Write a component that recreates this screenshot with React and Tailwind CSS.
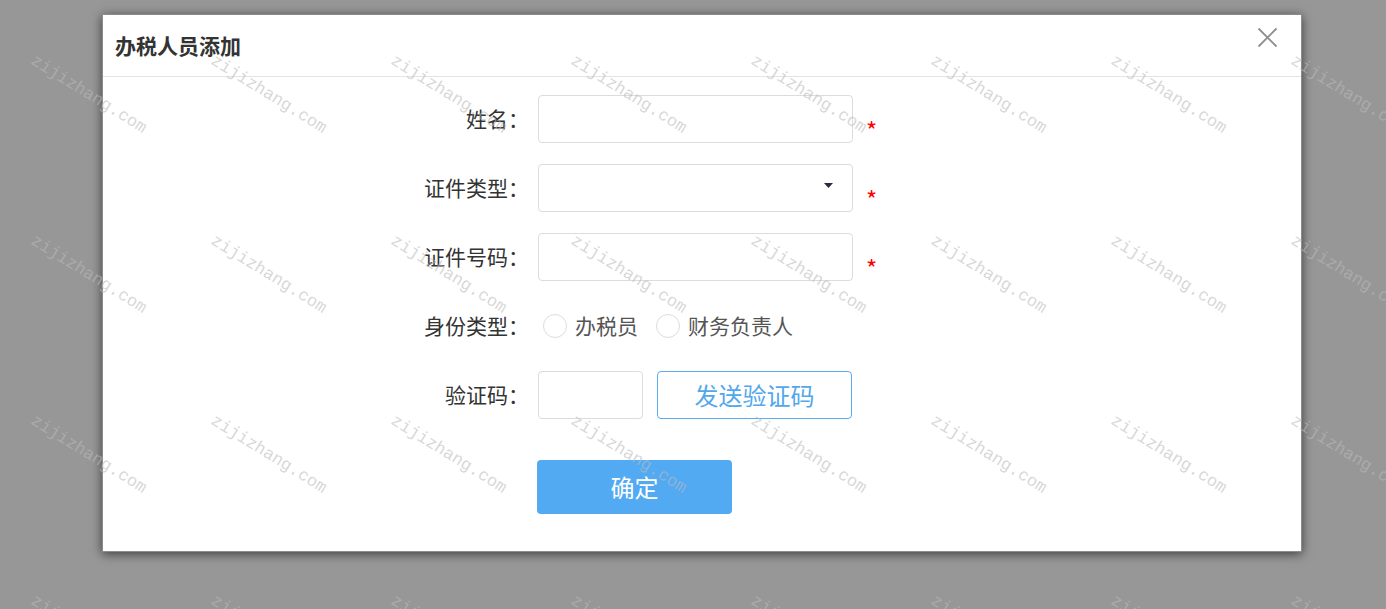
import { useState } from 'react';

const CJK = { fontFamily: '"Noto Sans CJK SC", "Noto Sans", sans-serif' };

const COLS = [0, 1, 2, 3, 4, 5, 6, 7];
const ROWS = [0, 1, 2, 3];

function Watermark() {
  return (
    <div className="pointer-events-none absolute inset-0 overflow-hidden">
      <div className="grid grid-cols-[repeat(8,180px)] auto-rows-[180px] pl-[37px] pt-[46px]">
        {ROWS.flatMap((r) =>
          COLS.map((c) => (
            <div key={`${r}-${c}`}>
              <span className="inline-block origin-top-left rotate-[32deg] whitespace-nowrap font-['Liberation_Mono',monospace] text-[17px] leading-none text-[rgba(186,186,186,0.58)]">
                zijizhang.com
              </span>
            </div>
          ))
        )}
      </div>
    </div>
  );
}

function Row({ label, children, required }) {
  return (
    <div className="flex items-center h-[48px]">
      <div className="w-[120px] text-right text-[21px] text-[#333] pr-[9px] whitespace-nowrap">{label}</div>
      {children}
      {required && <span className="ml-[13px] mt-[22px] text-[24px] leading-none text-[#f00]">*</span>}
    </div>
  );
}

function Radio({ label, checked, onClick }) {
  return (
    <button type="button" onClick={onClick} className="flex items-center gap-[8px]">
      <span className="flex w-[24px] h-[24px] items-center justify-center rounded-full border border-[#dcdcdc] bg-white">
        {checked && <span className="w-[12px] h-[12px] rounded-full bg-[#52aaf2]" />}
      </span>
      <span className="text-[21px] text-[#555]">{label}</span>
    </button>
  );
}

export default function App() {
  const [role, setRole] = useState(null);

  return (
    <div className="relative min-h-[609px] bg-[#979797] pl-[102px] pt-[14px]" style={CJK}>
      <div className="w-[1200px] h-[538px] bg-white border border-[#8c8c8c] shadow-[0_2px_10px_rgba(0,0,0,0.6)]">
        <div className="flex items-center justify-between h-[62px] border-b border-[#e3e3e3] pl-[12px] pr-[23px]">
          <h2 className="text-[21px] font-bold text-[#333]">办税人员添加</h2>
          <svg width="21" height="21" viewBox="0 0 21 21" className="-mt-[17px]">
            <path d="M1.5 1.5 L19.5 19.5 M19.5 1.5 L1.5 19.5" stroke="#8f8f8f" strokeWidth="1.8" fill="none" />
          </svg>
        </div>

        <div className="flex flex-col gap-[21px] pl-[315px] pt-[18px]">
          <Row label="姓名：" required>
            <input className="w-[315px] h-[48px] rounded-[4px] border border-[#dcdcdc] px-3 outline-none" />
          </Row>
          <Row label="证件类型：" required>
            <div className="flex w-[315px] h-[48px] items-center justify-end rounded-[4px] border border-[#dcdcdc] pr-[19px]">
              <svg width="9" height="5" viewBox="0 0 9 5" className="-mt-[6px]">
                <path d="M0 0 H9 L4.5 5 Z" fill="#2b2b3a" />
              </svg>
            </div>
          </Row>
          <Row label="证件号码：" required>
            <input className="w-[315px] h-[48px] rounded-[4px] border border-[#dcdcdc] px-3 outline-none" />
          </Row>
          <Row label="身份类型：">
            <div className="flex items-center gap-[18px] pl-[5px]">
              <Radio label="办税员" checked={role === 'a'} onClick={() => setRole('a')} />
              <Radio label="财务负责人" checked={role === 'b'} onClick={() => setRole('b')} />
            </div>
          </Row>
          <Row label="验证码：">
            <input className="w-[105px] h-[48px] rounded-[4px] border border-[#dcdcdc] px-3 outline-none" />
            <button className="ml-[14px] w-[195px] h-[48px] rounded-[4px] border border-[#5aabf0] text-[24px] text-[#52a8ec]">
              发送验证码
            </button>
          </Row>
          <div className="pl-[119px] pt-[20px]">
            <button className="w-[195px] h-[54px] rounded-[4px] bg-[#52aaf2] text-[24px] text-white">确定</button>
          </div>
        </div>
      </div>
      <Watermark />
    </div>
  );
}
